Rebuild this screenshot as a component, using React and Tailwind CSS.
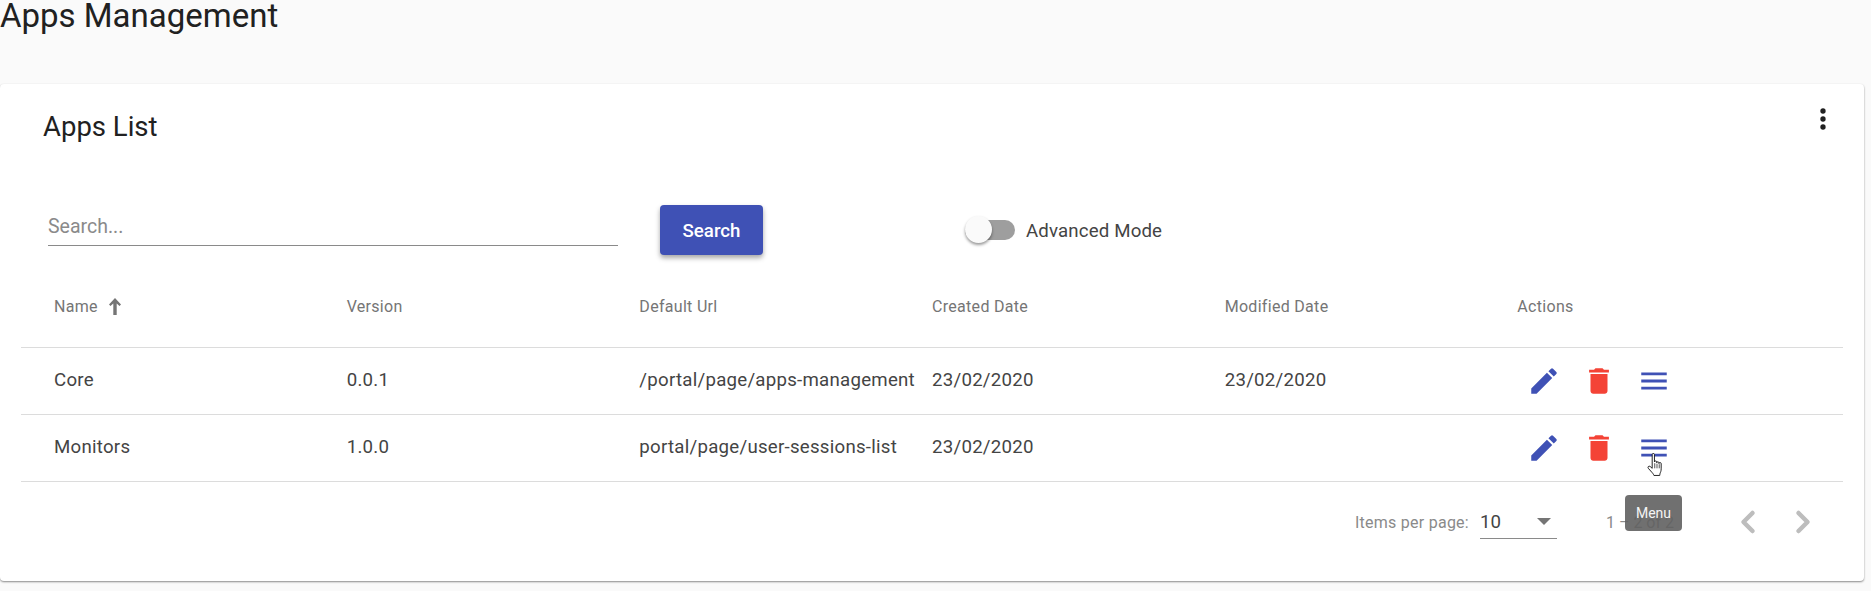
import React from 'react';
import { ChevronLeft, ChevronRight } from 'lucide-react';

const ROWS = [
  { name: 'Core', version: '0.0.1', url: '/portal/page/apps-management', created: '23/02/2020', modified: '23/02/2020' },
  { name: 'Monitors', version: '1.0.0', url: 'portal/page/user-sessions-list', created: '23/02/2020', modified: '' },
];

const Pencil = () => (
  <svg viewBox="0 0 24 24" className="w-[34px] h-[34px] fill-[#3f51b5]">
    <path d="M3 17.25V21h3.75L17.81 9.94l-3.75-3.75L3 17.25zM20.71 7.04a1 1 0 0 0 0-1.41l-2.34-2.34a1 1 0 0 0-1.41 0l-1.83 1.83 3.75 3.75 1.83-1.83z" />
  </svg>
);

const Trash = () => (
  <svg viewBox="0 0 24 24" className="w-[34px] h-[34px] fill-[#f44336]">
    <path d="M6 19c0 1.1.9 2 2 2h8c1.1 0 2-.9 2-2V7H6v12zM19 4h-3.5l-1-1h-5l-1 1H5v2h14V4z" />
  </svg>
);

const Menu = () => (
  <svg viewBox="0 0 24 24" className="w-[34px] h-[34px] fill-[#3f51b5]">
    <path d="M3 18h18v-2H3v2zm0-5h18v-2H3v2zm0-7v2h18V6H3z" />
  </svg>
);

const Hand = () => (
  <svg viewBox="1 1 14.5 24.5" className="w-[18px] h-[25px]">
    <path
      d="M5.5 2.5c0-1.4 2.2-1.4 2.2 0v7.2c0-1.2 2.2-1.2 2.2 0v.8c0-1.2 2.2-1.2 2.2 0v.8c0-1.2 2.2-1.2 2.2 0v5.2c0 2.2-.6 3.2-1 4.2-.3 1-.4 2.3-.4 2.3H7.2s-.6-1.6-1.6-2.6L1.7 16c-1-1.2.5-2.8 1.8-1.8l2 1.8V2.5z"
      fill="#fff"
      stroke="#111"
      strokeWidth="0.9"
      strokeLinejoin="round"
    />
    <path d="M8 11v5M10.2 11.5v4.5M12.4 12v4" stroke="#111" strokeWidth="0.7" fill="none" />
  </svg>
);

export default function App() {
  return (
    <div className="relative h-[591px] overflow-hidden bg-[#fafafa] text-[#212121]" style={{ fontFamily: 'Roboto, sans-serif' }}>
      {/* Page title */}
      <h1 className="h-[84px] text-[33px] leading-[32px] font-normal whitespace-nowrap">Apps Management</h1>

      {/* Card */}
      <div className="relative mr-[7px] h-[497px] bg-white rounded-[4px] shadow-[0_1px_2px_rgba(0,0,0,0.45)] px-[21px]">
        <div className="flex items-start justify-between h-[120px]">
          <h2 className="pl-[22px] pt-[27px] text-[27.5px] leading-[32px] font-normal">Apps List</h2>
          <svg viewBox="0 0 24 24" className="w-[32px] h-[32px] fill-[#212121] mt-[19px] mr-[4px]">
            <circle cx="12" cy="6" r="2" />
            <circle cx="12" cy="12" r="2" />
            <circle cx="12" cy="18" r="2" />
          </svg>
        </div>

        {/* Search bar */}
        <div className="flex items-center h-[52px] pl-[27px]">
          <div className="w-[570px] h-[36px] flex items-center border-b border-[#8a8a8a] -mt-[5px]">
            <span className="text-[19.5px] text-[#8a8a8a]">Search...</span>
          </div>
          <button className="ml-[42px] w-[103px] h-[50px] pt-[1px] rounded-[4px] bg-[#3f51b5] text-white text-[18.67px] font-medium shadow-[0_3px_5px_rgba(0,0,0,0.35)]">
            Search
          </button>
          <div className="ml-[202px] flex items-center">
            <div className="relative w-[50px] h-[20px] rounded-full bg-[#9e9e9e]">
              <div className="absolute left-0 -top-[4px] w-[27px] h-[27px] rounded-full bg-[#fafafa] shadow-[0_2px_3px_rgba(0,0,0,0.4)]" />
            </div>
            <span className="ml-[11px] pt-[1px] text-[18.67px] tracking-[0.15px] text-[#444]">Advanced Mode</span>
          </div>
        </div>

        {/* Table */}
        <div className="mt-[15px] px-[33px] grid grid-cols-6 items-center h-[77px] text-[16px] tracking-[0.3px] text-[#757575] border-b border-[#dcdcdc]">
          <div className="flex items-center -mt-[4px]">
            Name
            <svg viewBox="0 0 12 17" className="ml-[11px] -mt-[2px] w-[12px] h-[17px] fill-[#757575]">
              <path d="M6 0L12 6.5 10.5 8 7.7 5.5V17H4.3V5.5L1.5 8 0 6.5z" />
            </svg>
          </div>
          <div className="-mt-[4px]">Version</div>
          <div className="-mt-[4px]">Default Url</div>
          <div className="-mt-[4px]">Created Date</div>
          <div className="-mt-[4px]">Modified Date</div>
          <div className="-mt-[4px]">Actions</div>
        </div>
        {ROWS.map((r) => (
          <div key={r.name} className="px-[33px] grid grid-cols-6 items-center h-[67px] text-[18.67px] tracking-[0.25px] text-[#444] border-b border-[#dcdcdc]">
            <div className="-mt-[2px]">{r.name}</div>
            <div className="-mt-[2px]">{r.version}</div>
            <div className="-mt-[2px] whitespace-nowrap">{r.url}</div>
            <div className="-mt-[2px]">{r.created}</div>
            <div className="-mt-[2px]">{r.modified}</div>
            <div className="flex items-center gap-[21px] pl-[10px]">
              <Pencil />
              <Trash />
              <Menu />
            </div>
          </div>
        ))}

        {/* Paginator */}
        <div className="flex items-center h-[81px] text-[#8a8a8a]">
          <span className="ml-[1334px] text-[16px] tracking-[0.25px]">Items per page:</span>
          <div className="ml-[11px] w-[77px] h-[32px] flex items-center justify-between border-b border-[#8a8a8a] text-[18.67px] text-[#444]">
            10
            <span className="mr-[6px] -mt-[2px] w-0 h-0 border-x-[7px] border-x-transparent border-t-[7px] border-t-[#757575]" />
          </div>
          <span className="ml-[49px] text-[16px] whitespace-nowrap">1 – 2 of 2</span>
          <ChevronLeft size={36} strokeWidth={3} className="absolute left-[1730px] top-[420px] text-[#bdbdbd]" />
          <ChevronRight size={36} strokeWidth={3} className="absolute left-[1785px] top-[420px] text-[#bdbdbd]" />
        </div>
      </div>

      {/* Tooltip and mouse pointer over the table */}
      <div className="absolute left-[1625px] top-[495px] w-[57px] h-[36px] rounded-[4px] bg-[rgba(97,97,97,0.9)] text-[#f5f5f5] text-[14px] flex items-center justify-center">
        Menu
      </div>
      <div className="absolute left-[1646px] top-[453px]">
        <Hand />
      </div>
    </div>
  );
}
